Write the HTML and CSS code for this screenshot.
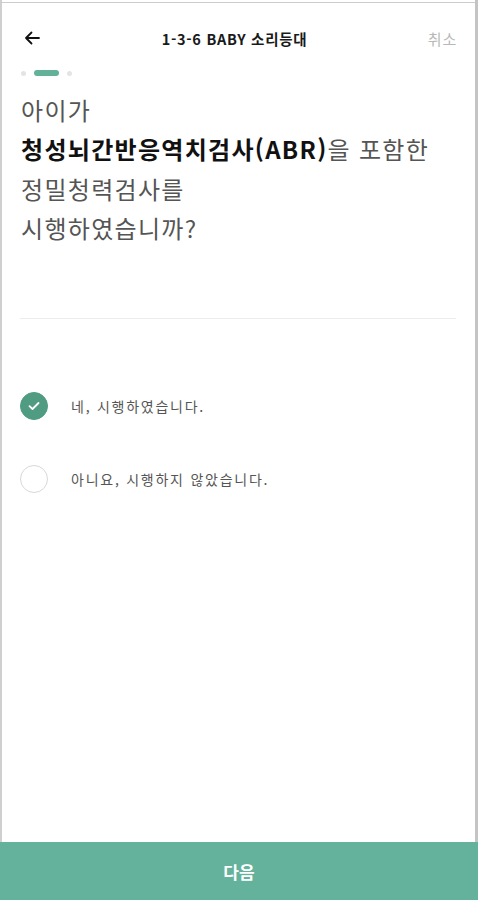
FILE: index.html
```html
<!DOCTYPE html>
<html lang="ko">
<head>
<meta charset="utf-8">
<title>1-3-6 BABY 소리등대</title>
<link rel="stylesheet" href="styles.css">
</head>
<body>
<div class="frame">
  <header class="header">
    <button class="back" aria-label="뒤로">
      <svg width="16" height="14" viewBox="0 0 16 14"><path d="M15 7H2M7.5 1.5L2 7l5.5 5.5" fill="none" stroke="#111" stroke-width="1.8" stroke-linecap="round" stroke-linejoin="round"/></svg>
    </button>
    <h1 class="title">1-3-6 BABY 소리등대</h1>
    <span class="cancel">취소</span>
  </header>
  <div class="progress">
    <span class="dot"></span>
    <span class="pill"></span>
    <span class="dot"></span>
  </div>
  <p class="question">아이가<br><strong>청성뇌간반응역치검사(ABR)</strong>을 포함한<br>정밀청력검사를<br>시행하였습니까?</p>
  <hr class="divider">
  <ul class="options">
    <li class="option">
      <span class="radio checked">
        <svg width="12" height="10" viewBox="0 0 12 10"><path d="M1.5 5.2l3 2.8 6-6" fill="none" stroke="#fff" stroke-width="1.8" stroke-linecap="round" stroke-linejoin="round"/></svg>
      </span>
      <span class="label">네, 시행하였습니다.</span>
    </li>
    <li class="option">
      <span class="radio"></span>
      <span class="label">아니요, 시행하지 않았습니다.</span>
    </li>
  </ul>
  <button class="next">다음</button>
</div>
</body>
</html>
```
FILE: styles.css
```css
* { box-sizing: border-box; }
html, body { margin: 0; padding: 0; background: #fff; }
body {
  font-family: "Noto Sans CJK KR", "Noto Sans", sans-serif;
  color: #222;
}
.frame {
  width: 478px;
  height: 900px;
  padding-top: 2px;
  border-left: 2px solid #cfcfcf;
  border-right: 3px solid #c4c4c4;
  display: flex;
  flex-direction: column;
  position: relative;
}
.frame::before {
  content: "";
  display: block;
  height: 1px;
  background: #cccccc;
}
.header {
  height: 44px;
  margin-top: 13px;
  display: flex;
  align-items: center;
  justify-content: space-between;
  padding: 0 18px 0 22px;
}
.back {
  border: 0;
  background: none;
  padding: 0;
  width: 20px;
  height: 20px;
  display: flex;
  align-items: center;
  justify-content: flex-start;
}
.title {
  margin: 0;
  font-size: 14.5px;
  font-weight: 700;
  color: #1a1a1a;
  letter-spacing: 0.7px;
  position: absolute;
  left: 0;
  right: 0;
  text-align: center;
  pointer-events: none;
  transform: translateX(-4px);
}
.cancel {
  font-size: 15px;
  color: #b8b8b8;
  letter-spacing: 0.8px;
}
.progress {
  height: 6px;
  margin-top: 10px;
  padding-left: 19px;
  display: flex;
  align-items: center;
  gap: 8px;
}
.dot {
  width: 5px;
  height: 5px;
  border-radius: 50%;
  background: #e4e4e4;
}
.pill {
  width: 25px;
  height: 6px;
  border-radius: 3px;
  background: #62b198;
}
.question {
  margin: 14px 0 0;
  padding-left: 19px;
  font-size: 24px;
  line-height: 39.3px;
  color: #555;
  letter-spacing: 1.3px;
}
.question strong {
  color: #111;
  font-weight: 700;
}
.divider {
  margin: 71px 19px 0 18px;
  border: 0;
  height: 1px;
  background: #ececec;
}
.options {
  list-style: none;
  margin: 73px 0 0;
  padding: 0 0 0 18px;
  display: flex;
  flex-direction: column;
  gap: 45px;
}
.option {
  display: flex;
  align-items: center;
  height: 28px;
}
.radio {
  width: 28px;
  height: 28px;
  border-radius: 50%;
  border: 1.5px solid #d8d8d8;
  display: flex;
  align-items: center;
  justify-content: center;
  flex: none;
}
.radio.checked {
  background: #4f9c82;
  border-color: #4f9c82;
}
.label {
  margin-left: 23px;
  font-size: 14px;
  color: #555;
  letter-spacing: 1.75px;
}
.next {
  margin-top: auto;
  margin-left: -2px;
  margin-right: -3px;
  width: 478px;
  height: 58px;
  border: 0;
  background: #64b29b;
  color: #fff;
  font-family: "Noto Sans CJK KR", "Noto Sans", sans-serif;
  font-size: 17px;
  font-weight: 700;
  padding: 0;
}
```
